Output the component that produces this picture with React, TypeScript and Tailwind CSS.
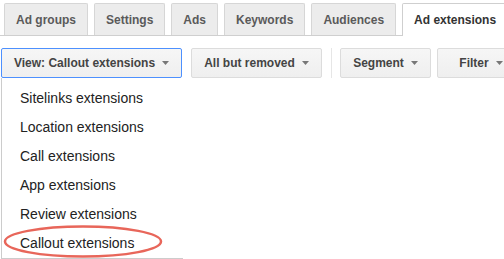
import React from 'react';

const tabs = ['Ad groups', 'Settings', 'Ads', 'Keywords', 'Audiences'];

const menuItems = [
  'Sitelinks extensions',
  'Location extensions',
  'Call extensions',
  'App extensions',
  'Review extensions',
  'Callout extensions',
];

const Caret: React.FC = () => (
  <svg width="7" height="4" viewBox="0 0 7 4" className="shrink-0">
    <path d="M0 0 L7 0 L3.5 4 Z" fill="#777" />
  </svg>
);

const ToolButton: React.FC<{ label: string; width: string; active?: boolean }> = ({ label, width, active }) => (
  <button
    className={`${width} h-[30px] flex items-center justify-center gap-[7px] rounded-[2px] border bg-gradient-to-b from-[#f6f6f6] to-[#efefef] text-[12px] font-bold text-[#444] whitespace-nowrap ${
      active ? 'border-[#4d90fe]' : 'border-[#dcdcdc]'
    }`}
  >
    <span>{label}</span>
    <Caret />
  </button>
);

export default function App() {
  return (
    <div className="relative w-[504px] h-[259px] overflow-hidden bg-white font-['Liberation_Sans',Arial,sans-serif]">
      {/* Tab strip */}
      <div className="flex items-end gap-[6px] h-[36px] pl-[4px] border-b border-[#cfcfcf]">
        {tabs.map((t) => (
          <div
            key={t}
            className="shrink-0 whitespace-nowrap h-[32px] px-[11px] flex items-center rounded-t-[2px] border border-b-0 border-[#d6d6d6] bg-[#ececec] text-[12px] font-bold text-[#5a5a5a]"
          >
            {t}
          </div>
        ))}
        <div className="shrink-0 relative -mb-px h-[33px] px-[11px] pb-px flex items-center rounded-t-[2px] border border-b-0 border-[#cfcfcf] bg-white text-[12px] font-bold text-[#333] whitespace-nowrap">
          Ad extensions
        </div>
      </div>

      {/* Toolbar */}
      <div className="flex items-start mt-[12px] pl-[1px]">
        <div className="relative shrink-0">
          <ToolButton label="View: Callout extensions" width="w-[181px]" active />
          {/* Dropdown menu */}
          <div className="absolute left-0 top-full w-[182px] pt-[6px] border-l border-b border-[#cccccc] bg-white">
            {menuItems.map((item) => (
              <div key={item} className="h-[29px] flex items-center pl-[18px] text-[14px] text-[#222] whitespace-nowrap">
                {item}
              </div>
            ))}
          </div>
        </div>
        <div className="ml-[9px] shrink-0">
          <ToolButton label="All but removed" width="w-[131px]" />
        </div>
        <div className="ml-[9px] w-px h-[30px] bg-[#e6e6e6] shrink-0" />
        <div className="ml-[8px] shrink-0">
          <ToolButton label="Segment" width="w-[91px]" />
        </div>
        <div className="ml-[6px] shrink-0">
          <ToolButton label="Filter" width="w-[88px]" />
        </div>
      </div>

      {/* Highlight ring */}
      <svg className="absolute left-[2px] top-[224px] pointer-events-none" width="164" height="35" viewBox="0 0 164 35">
        <ellipse cx="81" cy="17.5" rx="78" ry="15" fill="none" stroke="#e8665a" strokeWidth="2.5" />
      </svg>
    </div>
  );
}
